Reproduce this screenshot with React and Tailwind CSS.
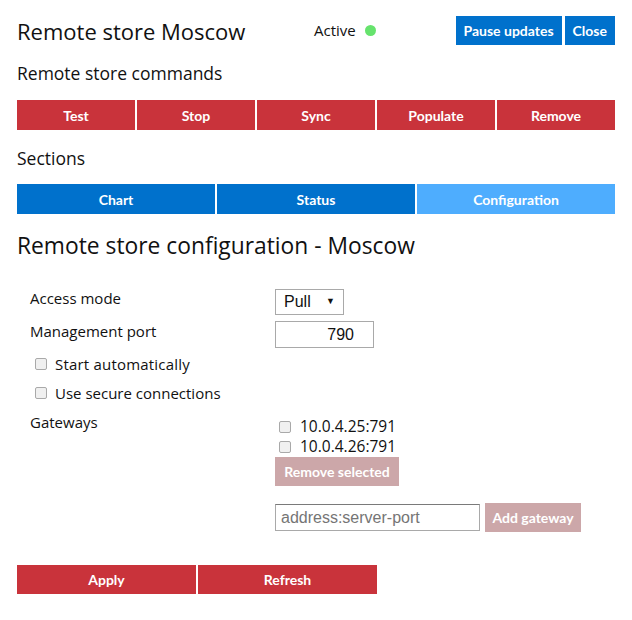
import React from "react";

const Box = () => (
  <span className="inline-block w-[12px] h-[12px] rounded-[2px] border border-[#a9a9a9] bg-[#f0f0f0] shrink-0" />
);

export default function App() {
  const commands = ["Test", "Stop", "Sync", "Populate", "Remove"];
  const sections = ["Chart", "Status", "Configuration"];

  return (
    <div className="w-[632px] h-[620px] bg-white px-[17px] font-['Open_Sans',sans-serif] text-[#111]">
      {/* Header */}
      <div className="flex items-center h-[29px] mt-[16px]">
        <h1 className="w-[297px] text-[22px] leading-none">Remote store Moscow</h1>
        <span className="text-[15px]">Active</span>
        <span className="ml-[9px] w-[11px] h-[11px] rounded-full bg-[#66e36d]" />
        <div className="ml-auto flex gap-[3px] h-full font-['Lato',sans-serif] font-bold text-[14px] text-white">
          <button className="px-[8px] bg-[#0071cc]">Pause updates</button>
          <button className="px-[8px] bg-[#0071cc]">Close</button>
        </div>
      </div>

      {/* Commands */}
      <h2 className="mt-[17px] text-[17.5px] leading-[22px]">Remote store commands</h2>
      <div className="mt-[16px] flex gap-[2px] h-[30px] font-['Lato',sans-serif] font-bold text-[14px] text-white">
        {commands.map((c) => (
          <button key={c} className="flex-1 bg-[#c9333b]">
            {c}
          </button>
        ))}
      </div>

      {/* Sections */}
      <h2 className="mt-[17px] text-[17.5px] leading-[22px]">Sections</h2>
      <div className="mt-[15px] flex gap-[2px] h-[30px] font-['Lato',sans-serif] font-bold text-[14px] text-white">
        {sections.map((s, i) => (
          <button key={s} className={`flex-1 ${i === 2 ? "bg-[#4eadfe]" : "bg-[#0071cc]"}`}>
            {s}
          </button>
        ))}
      </div>

      {/* Configuration */}
      <h2 className="mt-[18px] text-[22.8px] leading-[28px]">Remote store configuration - Moscow</h2>

      <div className="mt-[28px] pl-[13px] text-[15px]">
        <div className="flex items-start">
          <span className="w-[245px] leading-[20px]">Access mode</span>
          <div className="mt-[1px] flex items-center justify-between w-[69px] h-[26px] border border-[#a9a9a9] px-[8px] font-['Liberation_Sans',sans-serif] text-[16px]">
            <span>Pull</span>
            <span className="text-[9px]">▼</span>
          </div>
        </div>
        <div className="flex items-start mt-[6px]">
          <span className="w-[245px] leading-[20px]">Management port</span>
          <div className="flex items-center justify-end w-[99px] h-[27px] border border-[#a9a9a9] pr-[19px] font-['Liberation_Sans',sans-serif] text-[16px]">
            790
          </div>
        </div>
        <div className="flex items-center gap-[8px] h-[22px] mt-[5px] pl-[5px]">
          <Box />
          <span className="tracking-[0.2px]">Start automatically</span>
        </div>
        <div className="flex items-center gap-[8px] h-[22px] mt-[7px] pl-[5px]">
          <Box />
          <span>Use secure connections</span>
        </div>

        <div className="flex mt-[8px]">
          <span className="w-[245px] leading-[20px]">Gateways</span>
          <div className="flex flex-col">
            <div className="mt-[5px] flex items-center gap-[9px] pl-[4px] h-[20px]">
              <Box />
              <span className="text-[15.5px]">10.0.4.25:791</span>
            </div>
            <div className="flex items-center gap-[9px] pl-[4px] h-[20px]">
              <Box />
              <span className="text-[15.5px]">10.0.4.26:791</span>
            </div>
            <button className="w-[124px] h-[29px] bg-[#cca7a9] text-white font-['Lato',sans-serif] font-bold text-[14px]">
              Remove selected
            </button>
            <div className="mt-[17px] flex items-center gap-[5px]">
              <div className="w-[205px] h-[27px] border border-[#a9a9a9] border-t-[#7a7a7a] px-[5px] flex items-center font-['Liberation_Sans',sans-serif] text-[16px] text-[#757575]">
                address:server-port
              </div>
              <button className="w-[96px] h-[29px] bg-[#cca7a9] text-white font-['Lato',sans-serif] font-bold text-[14px]">
                Add gateway
              </button>
            </div>
          </div>
        </div>
      </div>

      <div className="mt-[33px] flex gap-[2px] h-[29px] font-['Lato',sans-serif] font-bold text-[14px] text-white">
        <button className="w-[179px] bg-[#c9333b]">Apply</button>
        <button className="w-[179px] bg-[#c9333b]">Refresh</button>
      </div>
    </div>
  );
}
